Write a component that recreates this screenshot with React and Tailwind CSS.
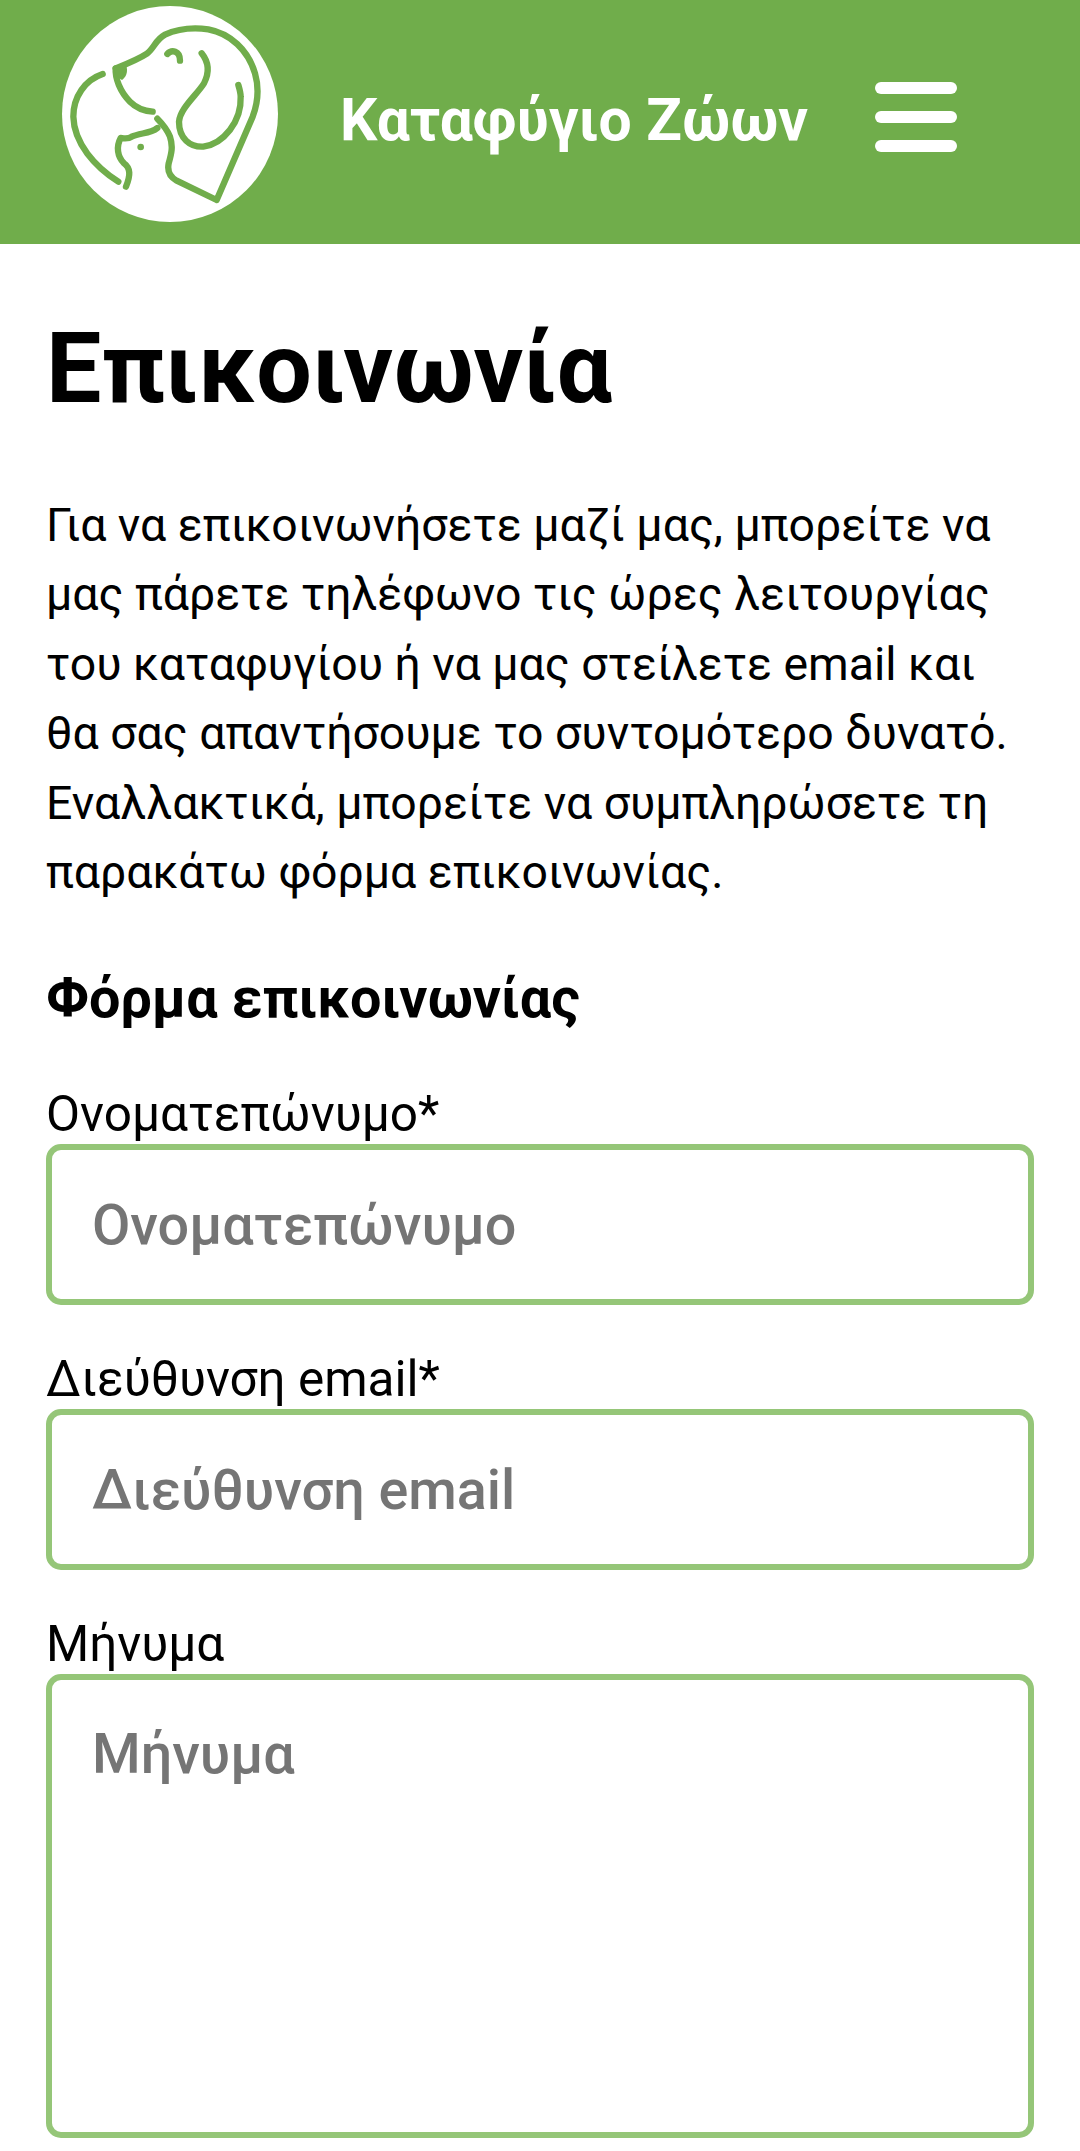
const Logo = () => (
  <svg viewBox="186 18 648 648" className="w-[216px] h-[216px] shrink-0">
    <circle cx="510" cy="342" r="324" fill="#fff" />
    <g fill="none" stroke="#70ad4b" strokeWidth="19" strokeLinecap="round" strokeLinejoin="round">
      <path d="M347 205C380 192 415 178 442 160C462 144 468 118 495 104C530 88 580 82 625 88C690 100 745 150 765 220C778 265 775 305 758 350L650 600L530 542C508 530 502 510 506 490C514 462 520 440 510 410C502 390 488 372 472 356" />
      <path d="M347 205C345 235 360 275 390 305C410 325 435 333 458 335" />
      <path d="M502 162C515 148 540 152 540 182" />
      <path d="M605 160C625 185 630 215 612 250C590 285 540 325 537 365C537 415 570 442 610 440C670 432 725 365 722 290C722 278 718 265 715 255" />
      <path d="M308 222C255 240 220 290 220 350C222 430 285 500 355 545" />
      <path d="M472 384C450 402 420 398 395 410C385 418 372 415 362 414C348 440 352 470 372 490C392 505 392 525 378 560" />
    </g>
    <path d="M344 204L380 200C384 220 376 232 366 240C352 232 342 218 344 204Z" fill="#70ad4b" />
    <circle cx="422" cy="441" r="10" fill="#70ad4b" />
  </svg>
);

const Label = ({ children }) => (
  <label className="block mb-[4px] text-[49.5px] leading-[52px] text-black whitespace-nowrap">{children}</label>
);

const inputCls =
  "flex items-center w-full h-[161px] border-[6px] border-[#95c678] rounded-[15px] px-[40px] bg-white text-[#757575] text-[55.7px] leading-[64px] font-medium";

const App = () => {
  return (
    <div className="w-[1080px] h-[2151px] overflow-hidden bg-white font-['Roboto',sans-serif]">
      <header className="h-[244px] bg-[#70ad4b] flex items-start pl-[62px] pt-[6px]">
        <Logo />
        <span className="ml-[62px] mt-[82px] text-[58.8px] leading-[64px] font-bold text-white whitespace-nowrap">
          Καταφύγιο Ζώων
        </span>
        <div className="ml-[67px] mt-[76px] w-[82px] flex flex-col gap-[17px]">
          <div className="h-[12px] rounded-full bg-white" />
          <div className="h-[12px] rounded-full bg-white" />
          <div className="h-[12px] rounded-full bg-white" />
        </div>
      </header>
      <main className="px-[46px]">
        <h1 className="mt-[69px] text-[98.5px] leading-[112px] font-bold text-black whitespace-nowrap">Επικοινωνία</h1>
        <p className="mt-[66px] text-[46.4px] leading-[69.4px] text-black whitespace-nowrap">
          Για να επικοινωνήσετε μαζί μας, μπορείτε να<br />
          μας πάρετε τηλέφωνο τις ώρες λειτουργίας<br />
          του καταφυγίου ή να μας στείλετε email και<br />
          θα σας απαντήσουμε το συντομότερο δυνατό.<br />
          Εναλλακτικά, μπορείτε να συμπληρώσετε τη<br />
          παρακάτω φόρμα επικοινωνίας.
        </p>
        <h2 className="mt-[59px] text-[55.7px] leading-[64px] font-bold text-black whitespace-nowrap">Φόρμα επικοινωνίας</h2>
        <form className="mt-[58px] w-[988px]">
          <Label>Ονοματεπώνυμο*</Label>
          <div className={inputCls}>Ονοματεπώνυμο</div>
          <div className="mt-[48px]">
            <Label>Διεύθυνση email*</Label>
          </div>
          <div className={inputCls}>Διεύθυνση email</div>
          <div className="mt-[48px]">
            <Label>Μήνυμα</Label>
          </div>
          <div className="w-full h-[464px] border-[6px] border-[#95c678] rounded-[15px] pl-[40px] pt-[42px] text-[#757575] text-[55.7px] leading-[64px] font-medium">
            Μήνυμα
          </div>
        </form>
      </main>
    </div>
  );
};

export default App;
